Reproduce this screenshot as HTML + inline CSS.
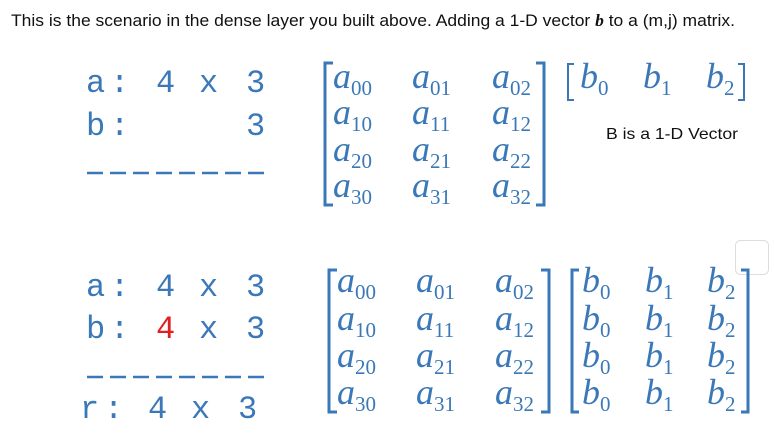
<!DOCTYPE html>
<html><head><meta charset="utf-8"><style>
html,body{margin:0;padding:0;background:#fff;width:774px;height:444px;overflow:hidden}
svg{position:absolute;left:0;top:0}
.t{font-family:"Liberation Sans",Arial,sans-serif;font-size:16.5px;fill:#111}
.m{font-family:"Liberation Mono",monospace;font-size:32px;fill:#3a78b8}
.v{font-family:"Liberation Serif",serif;font-style:italic;font-size:36px;fill:#3a78b8}
.s{font-family:"Liberation Serif",serif;font-style:normal;font-size:21px}
.c{font-family:"Liberation Sans",sans-serif;font-size:16px;fill:#111}
</style></head><body>
<svg width="774" height="444" xmlns="http://www.w3.org/2000/svg">
<text class="t" x="11" y="26" textLength="724" lengthAdjust="spacingAndGlyphs">This is the scenario in the dense layer you built above. Adding a 1-D vector <tspan font-family="Liberation Serif" font-style="italic" font-weight="bold">b</tspan> to a (m,j) matrix.</text>

<g class="m">
<text x="86" y="92">a</text><text x="110" y="92">:</text><text x="156" y="92">4</text><text x="199" y="92">x</text><text x="246" y="92">3</text>
<text x="86" y="135">b</text><text x="110" y="135">:</text><text x="246" y="135">3</text>
<text x="86" y="296">a</text><text x="110" y="296">:</text><text x="156" y="296">4</text><text x="199" y="296">x</text><text x="246" y="296">3</text>
<text x="86" y="338">b</text><text x="110" y="338">:</text><text x="156" y="338" fill="#e02020">4</text><text x="199" y="338">x</text><text x="246" y="338">3</text>
<text x="80" y="418">r</text><text x="104" y="418">:</text><text x="148" y="418">4</text><text x="191" y="418">x</text><text x="238" y="418">3</text>
</g>
<path d="M87 173h16M110 173h16M133 173h16M156 173h16M179 173h16M202 173h16M225 173h16M248 173h16" stroke="#3a78b8" stroke-width="2.5"/>
<path d="M87 377h16M110 377h16M133 377h16M156 377h16M179 377h16M202 377h16M225 377h16M248 377h16" stroke="#3a78b8" stroke-width="2.5"/>

<g class="v">
<text x="333" y="88">a<tspan class="s" dy="7">00</tspan></text>
<text x="412" y="88">a<tspan class="s" dy="7">01</tspan></text>
<text x="492" y="88">a<tspan class="s" dy="7">02</tspan></text>
<text x="333" y="124">a<tspan class="s" dy="7">10</tspan></text>
<text x="412" y="124">a<tspan class="s" dy="7">11</tspan></text>
<text x="492" y="124">a<tspan class="s" dy="7">12</tspan></text>
<text x="333" y="161">a<tspan class="s" dy="7">20</tspan></text>
<text x="412" y="161">a<tspan class="s" dy="7">21</tspan></text>
<text x="492" y="161">a<tspan class="s" dy="7">22</tspan></text>
<text x="333" y="197">a<tspan class="s" dy="7">30</tspan></text>
<text x="412" y="197">a<tspan class="s" dy="7">31</tspan></text>
<text x="492" y="197">a<tspan class="s" dy="7">32</tspan></text>
</g>
<path d="M333 63 H325 V205 H333 M536 63 H544 V205 H536" stroke="#3a78b8" stroke-width="3" fill="none"/>

<g class="v">
<text x="580" y="88">b<tspan class="s" dy="7">0</tspan></text>
<text x="643" y="88">b<tspan class="s" dy="7">1</tspan></text>
<text x="706" y="88">b<tspan class="s" dy="7">2</tspan></text>
</g>
<path d="M574 64 H568 V100 H574 M738 64 H744 V100 H738" stroke="#3a78b8" stroke-width="2" fill="none"/>
<text class="c" x="606" y="139" textLength="132" lengthAdjust="spacingAndGlyphs">B is a  1-D Vector</text>

<rect x="735.5" y="240.5" width="33" height="34" rx="5" fill="none" stroke="#ddd"/>

<g class="v">
<text x="337" y="292">a<tspan class="s" dy="7">00</tspan></text>
<text x="416" y="292">a<tspan class="s" dy="7">01</tspan></text>
<text x="495" y="292">a<tspan class="s" dy="7">02</tspan></text>
<text x="337" y="330">a<tspan class="s" dy="7">10</tspan></text>
<text x="416" y="330">a<tspan class="s" dy="7">11</tspan></text>
<text x="495" y="330">a<tspan class="s" dy="7">12</tspan></text>
<text x="337" y="367">a<tspan class="s" dy="7">20</tspan></text>
<text x="416" y="367">a<tspan class="s" dy="7">21</tspan></text>
<text x="495" y="367">a<tspan class="s" dy="7">22</tspan></text>
<text x="337" y="404">a<tspan class="s" dy="7">30</tspan></text>
<text x="416" y="404">a<tspan class="s" dy="7">31</tspan></text>
<text x="495" y="404">a<tspan class="s" dy="7">32</tspan></text>
</g>
<path d="M337 270 H329 V412 H337 M541 270 H549 V412 H541" stroke="#3a78b8" stroke-width="3" fill="none"/>

<g class="v">
<text x="582" y="292">b<tspan class="s" dy="7">0</tspan></text>
<text x="645" y="292">b<tspan class="s" dy="7">1</tspan></text>
<text x="707" y="292">b<tspan class="s" dy="7">2</tspan></text>
<text x="582" y="330">b<tspan class="s" dy="7">0</tspan></text>
<text x="645" y="330">b<tspan class="s" dy="7">1</tspan></text>
<text x="707" y="330">b<tspan class="s" dy="7">2</tspan></text>
<text x="582" y="367">b<tspan class="s" dy="7">0</tspan></text>
<text x="645" y="367">b<tspan class="s" dy="7">1</tspan></text>
<text x="707" y="367">b<tspan class="s" dy="7">2</tspan></text>
<text x="582" y="404">b<tspan class="s" dy="7">0</tspan></text>
<text x="645" y="404">b<tspan class="s" dy="7">1</tspan></text>
<text x="707" y="404">b<tspan class="s" dy="7">2</tspan></text>
</g>
<path d="M579 270 H572 V412 H579 M741 270 H748 V412 H741" stroke="#3a78b8" stroke-width="3" fill="none"/>
</svg>
</body></html>
